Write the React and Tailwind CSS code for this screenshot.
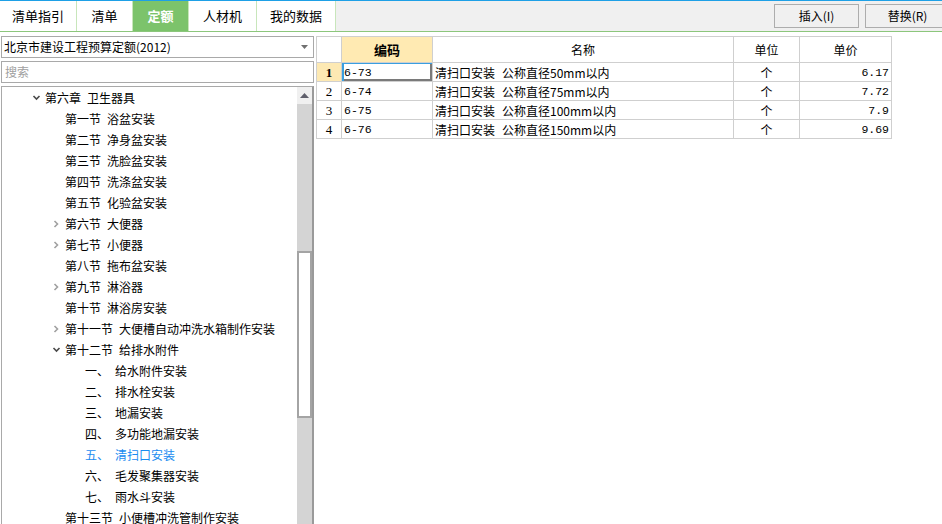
import { useState } from 'react';

const tabs = [
  { name: '清单指引', w: 'w-[77px]' },
  { name: '清单', w: 'w-[56px]' },
  { name: '定额', w: 'w-[56px]' },
  { name: '人材机', w: 'w-[68px]' },
  { name: '我的数据', w: 'w-[79px]' },
];

// level, state ('open' | 'closed' | null), prefix, text
const tree = [
  [0, 'open', '第六章', '卫生器具'],
  [1, null, '第一节', '浴盆安装'],
  [1, null, '第二节', '净身盆安装'],
  [1, null, '第三节', '洗脸盆安装'],
  [1, null, '第四节', '洗涤盆安装'],
  [1, null, '第五节', '化验盆安装'],
  [1, 'closed', '第六节', '大便器'],
  [1, 'closed', '第七节', '小便器'],
  [1, null, '第八节', '拖布盆安装'],
  [1, 'closed', '第九节', '淋浴器'],
  [1, null, '第十节', '淋浴房安装'],
  [1, 'closed', '第十一节', '大便槽自动冲洗水箱制作安装'],
  [1, 'open', '第十二节', '给排水附件'],
  [2, null, '一、', '给水附件安装'],
  [2, null, '二、', '排水栓安装'],
  [2, null, '三、', '地漏安装'],
  [2, null, '四、', '多功能地漏安装'],
  [2, null, '五、', '清扫口安装'],
  [2, null, '六、', '毛发聚集器安装'],
  [2, null, '七、', '雨水斗安装'],
  [1, null, '第十三节', '小便槽冲洗管制作安装'],
];

const rows = [
  { code: '6-73', spec: '公称直径50mm以内', unit: '个', price: '6.17' },
  { code: '6-74', spec: '公称直径75mm以内', unit: '个', price: '7.72' },
  { code: '6-75', spec: '公称直径100mm以内', unit: '个', price: '7.9' },
  { code: '6-76', spec: '公称直径150mm以内', unit: '个', price: '9.69' },
];

const indent = ['pl-[28px]', 'pl-[48px]', 'pl-[68px]'];

const Chevron = ({ state }) => {
  if (state === 'open')
    return (
      <svg width="15" height="10" viewBox="0 0 15 10">
        <polyline points="3.5,3 6.5,6 9.5,3" fill="none" stroke="#4a4a4a" strokeWidth="1.6" />
      </svg>
    );
  if (state === 'closed')
    return (
      <svg width="15" height="10" viewBox="0 0 15 10">
        <polyline points="4.5,2 7.5,5 4.5,8" fill="none" stroke="#a0a0a0" strokeWidth="1.6" />
      </svg>
    );
  return <span className="w-[15px]" />;
};

export default function App() {
  const [active, setActive] = useState('定额');

  return (
    <div className="w-[942px] h-[524px] overflow-hidden bg-white text-[12px] text-black font-['Noto_Sans_CJK_SC','Noto_Sans',sans-serif]">
      {/* Top tab bar */}
      <div className="h-[32px] flex border-t border-[#1ea0e6] border-b border-b-[#8cc67c] bg-[#f0f0f0] overflow-hidden">
        {tabs.map(t => (
          <div
            key={t.name}
            onClick={() => setActive(t.name)}
            className={`${t.w} shrink-0 flex items-center justify-center border-r border-[#c8e6bb] text-[13px] ${
              active === t.name ? 'bg-[#7cc36b] text-white font-bold' : 'bg-white'
            }`}
          >
            {t.name}
          </div>
        ))}
        <div className="flex gap-[6px] ml-[438px] pt-[3px] shrink-0">
          <button className="w-[85px] h-[24px] border border-[#adadad] bg-[#f0f0f0] text-[12px]">插入(I)</button>
          <button className="w-[85px] h-[24px] border border-[#adadad] bg-[#f0f0f0] text-[12px]">替换(R)</button>
        </div>
      </div>

      <div className="flex h-[492px]">
        {/* Left panel */}
        <div className="w-[315px] shrink-0 flex flex-col pl-[1px] pr-[1px]">
          <div className="mt-[4px] h-[22px] border border-[#a9a9a9] flex items-center pl-[2px] pr-[5px] bg-white">
            <span className="flex-1">北京市建设工程预算定额(2012)</span>
            <svg width="7" height="4" viewBox="0 0 7 4">
              <polygon points="0,0 7,0 3.5,4" fill="#707070" />
            </svg>
          </div>
          <div className="mt-[3px] h-[22px] border border-[#a9a9a9] flex items-center pl-[3px] text-[#a0a0a0] bg-white">
            搜索
          </div>
          <div className="mt-[3px] flex-1 flex border-l border-t border-[#a9a9a9] border-r-2 border-r-[#9a9a9a] overflow-hidden">
            <div className="flex-1">
              {tree.map(([lvl, state, pre, text], i) => {
                const hl = pre === '五、';
                return (
                  <div
                    key={i}
                    className={`h-[21px] flex items-center whitespace-nowrap ${indent[lvl]} ${hl ? 'text-[#1a8cf0]' : ''}`}
                  >
                    <Chevron state={state} />
                    <span className={lvl === 2 ? 'w-[30px]' : 'pr-[6px]'}>{pre}</span>
                    <span>{text}</span>
                  </div>
                );
              })}
            </div>
            {/* Scrollbar */}
            <div className="w-[15px] flex flex-col bg-[#d4d4d4]">
              <div className="h-[17px] bg-[#f0f0f0] flex items-center justify-center">
                <svg width="9" height="5" viewBox="0 0 9 5">
                  <polygon points="0,5 9,5 4.5,0" fill="#60606c" />
                </svg>
              </div>
              <div className="mt-[147px] h-[167px] bg-white border-2 border-[#a4a4a4]" />
            </div>
          </div>
        </div>

        {/* Right panel */}
        <div className="flex-1 pl-[1px] pt-[4px]">
          <table className="border-collapse table-fixed w-[575px]">
            <colgroup>
              <col className="w-[25px]" />
              <col className="w-[91px]" />
              <col className="w-[301px]" />
              <col className="w-[66px]" />
              <col className="w-[92px]" />
            </colgroup>
            <thead>
              <tr className="h-[26px]">
                <th className="border border-[#cfcfcf] font-normal"></th>
                <th className="border border-[#cfcfcf] bg-[#ffeab2] font-bold text-[13px]">编码</th>
                <th className="border border-[#cfcfcf] font-normal">名称</th>
                <th className="border border-[#cfcfcf] font-normal">单位</th>
                <th className="border border-[#cfcfcf] font-normal">单价</th>
              </tr>
            </thead>
            <tbody>
              {rows.map((r, i) => (
                <tr key={r.code} className="h-[19px] leading-[17px]">
                  <td
                    className={`border border-[#cfcfcf] text-center font-['Liberation_Serif',serif] text-[13px] ${
                      i === 0 ? 'bg-[#fde9b3] font-bold' : ''
                    }`}
                  >
                    {i + 1}
                  </td>
                  <td
                    className={`border border-[#cfcfcf] pl-[2px] font-['Liberation_Mono',monospace] text-[11.5px] ${
                      i === 0 ? 'shadow-[inset_2px_1px_0_#3a9fe0,inset_-2px_-2px_0_#7a7a7a]' : ''
                    }`}
                  >
                    {r.code}
                  </td>
                  <td className="border border-[#cfcfcf] pl-[2px] whitespace-nowrap overflow-hidden">
                    清扫口安装<span className="ml-[7px]">{r.spec}</span>
                  </td>
                  <td className="border border-[#cfcfcf] text-center">{r.unit}</td>
                  <td className="border border-[#cfcfcf] text-right pr-[2px] font-['Liberation_Mono',monospace] text-[11.5px]">
                    {r.price}
                  </td>
                </tr>
              ))}
            </tbody>
          </table>
        </div>
      </div>
    </div>
  );
}
